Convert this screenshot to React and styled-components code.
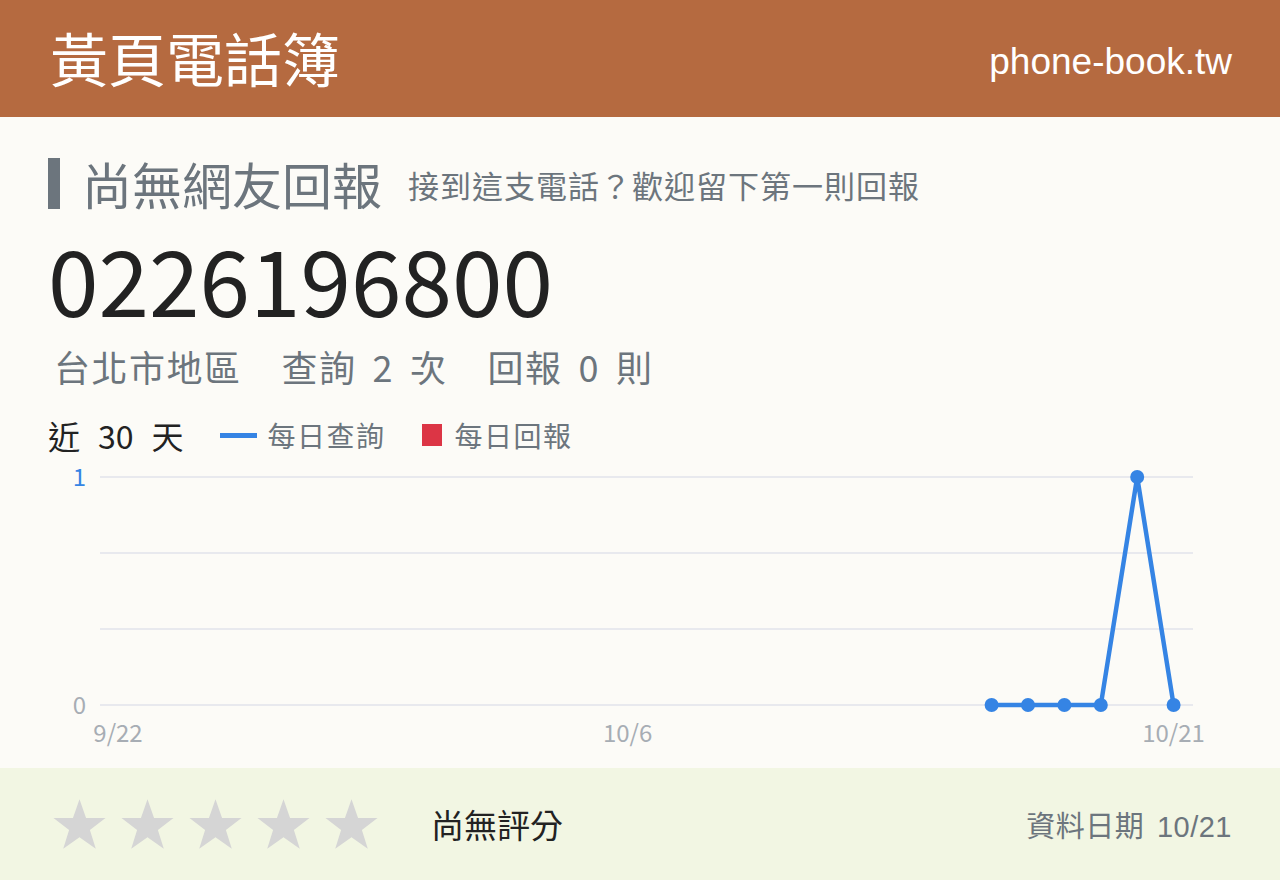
import React from 'react';
import styled, { createGlobalStyle } from 'styled-components';

const GlobalStyle = createGlobalStyle`
  html, body {
    margin: 0;
    padding: 0;
    background: #fcfbf7;
  }
  body {
    font-family: "Noto Sans CJK TC", "Noto Sans", sans-serif;
  }
`;

const Page = styled.div`
  width: 1280px;
  height: 880px;
  display: flex;
  flex-direction: column;
  background: #fcfbf7;
`;

const Header = styled.header`
  height: 117px;
  flex: none;
  display: flex;
  align-items: center;
  justify-content: space-between;
  padding: 0 48px 0 50px;
  background: #b56a40;
  color: #fff;
`;

const Brand = styled.div`
  font-size: 58px;
  line-height: 1;
  font-weight: 400;
  padding-bottom: 4px;
`;

const Domain = styled.div`
  font-family: "Liberation Sans", Arial, sans-serif;
  font-size: 37px;
  line-height: 1;
  padding-top: 6px;
`;

const Main = styled.main`
  flex: 1;
  display: flex;
  flex-direction: column;
  padding: 33px 48px 0;
`;

const TitleRow = styled.div`
  display: flex;
  align-items: center;
  height: 66px;
`;

const TitleBar = styled.span`
  width: 12px;
  height: 51px;
  background: #6c757d;
  margin-right: 22px;
`;

const Title = styled.h1`
  margin: 0;
  font-size: 50px;
  font-weight: 400;
  line-height: 1;
  color: #6c757d;
`;

const Subtitle = styled.span`
  margin-left: 26px;
  font-size: 31px;
  line-height: 1;
  letter-spacing: 1px;
  color: #6c757d;
  padding-top: 3px;
`;

const Phone = styled.div`
  font-size: 91px;
  line-height: 100px;
  height: 112px;
  color: #222;
  margin-top: 11px;
`;

const Stats = styled.div`
  display: flex;
  gap: 40px;
  margin-top: 5px;
  font-size: 36px;
  line-height: 44px;
  letter-spacing: 1.5px;
  color: #6c757d;
  padding-left: 6px;
`;

const Stat = styled.span`
  display: flex;
  white-space: pre;
`;

const Num = styled.span`
  margin: 0 ${(p) => p.space || '16px'};
`;

const ChartHead = styled.div`
  display: flex;
  align-items: center;
  margin-top: 27px;
  height: 40px;
`;

const Range = styled.span`
  display: flex;
  font-size: 32px;
  color: #222;
  margin-right: 36px;
`;

const Legend = styled.span`
  display: flex;
  align-items: center;
  font-size: 28px;
  color: #6c757d;
  letter-spacing: 1.5px;
  margin-right: 36px;
`;

const Swatch = styled.span`
  width: ${(p) => (p.line ? '37px' : '20px')};
  height: ${(p) => (p.line ? '5px' : '22px')};
  background: ${(p) => p.color};
  margin-right: ${(p) => (p.line ? '11px' : '13px')};
`;

const ChartSvg = styled.svg`
  display: block;
  width: 1184px;
  height: 290px;
  margin-top: 8px;
  font-family: "Noto Sans CJK JP", "Noto Sans", sans-serif;
`;

const Footer = styled.footer`
  height: 112px;
  flex: none;
  display: flex;
  align-items: center;
  padding: 0 48px 0 52px;
  background: #f2f6e3;
`;

const Stars = styled.div`
  display: flex;
  gap: 13px;
`;

const Rating = styled.span`
  margin-left: 52px;
  font-size: 33px;
  color: #222;
`;

const DataDate = styled.span`
  margin-left: auto;
  font-size: 29px;
  letter-spacing: 0.5px;
  color: #6c757d;
  font-family: "Liberation Sans", "Noto Sans CJK TC", sans-serif;
  word-spacing: 4px;
`;

const Star = () => (
  <svg width="55" height="52" viewBox="0 0 24 23">
    <path
      d="M12 0.5l2.9 8.3 8.6 0.1-6.9 5.2 2.6 8.4-7.2-5.1-7.2 5.1 2.6-8.4-6.9-5.2 8.6-0.1z"
      fill="#d5d5d5"
    />
  </svg>
);

const queries = Array.from({ length: 30 }, (_, i) => (i < 24 ? null : i === 28 ? 1 : 0));

const Chart = () => {
  const x0 = 70;
  const step = 36.4;
  const yTop = 14;
  const yBottom = 242;
  const pts = queries
    .map((v, i) => (v === null ? null : [x0 + i * step, yBottom - v * (yBottom - yTop)]))
    .filter(Boolean);
  const grid = [14, 90, 166, 242];
  return (
    <ChartSvg viewBox="0 0 1184 290">
      {grid.map((y) => (
        <line key={y} x1="52" x2="1145" y1={y} y2={y} stroke="#e8e9ee" strokeWidth="2" />
      ))}
      <text x="38" y="23" fill="#3584e4" fontSize="24" textAnchor="end">1</text>
      <text x="38" y="251" fill="#a7adb4" fontSize="24" textAnchor="end">0</text>
      <text x={x0} y="279" fill="#a7adb4" fontSize="24" textAnchor="middle">9/22</text>
      <text x={x0 + 14 * step} y="279" fill="#a7adb4" fontSize="24" textAnchor="middle">10/6</text>
      <text x={x0 + 29 * step} y="279" fill="#a7adb4" fontSize="24" textAnchor="middle">10/21</text>
      <polyline
        points={pts.map((p) => p.join(',')).join(' ')}
        fill="none"
        stroke="#3584e4"
        strokeWidth="4.5"
        strokeLinejoin="round"
      />
      {pts.map(([x, y]) => (
        <circle key={x} cx={x} cy={y} r="7" fill="#3584e4" />
      ))}
    </ChartSvg>
  );
};

export default function App() {
  return (
    <Page>
      <GlobalStyle />
      <Header>
        <Brand>黃頁電話簿</Brand>
        <Domain>phone-book.tw</Domain>
      </Header>
      <Main>
        <TitleRow>
          <TitleBar />
          <Title>尚無網友回報</Title>
          <Subtitle>接到這支電話？歡迎留下第一則回報</Subtitle>
        </TitleRow>
        <Phone>0226196800</Phone>
        <Stats>
          <Stat>台北市地區</Stat>
          <Stat>
            查詢<Num>2</Num>次
          </Stat>
          <Stat>
            回報<Num>0</Num>則
          </Stat>
        </Stats>
        <ChartHead>
          <Range>
            近<Num space="18px">30</Num>天
          </Range>
          <Legend>
            <Swatch line color="#3584e4" />
            每日查詢
          </Legend>
          <Legend>
            <Swatch color="#dc3545" />
            每日回報
          </Legend>
        </ChartHead>
        <Chart />
      </Main>
      <Footer>
        <Stars>
          {[0, 1, 2, 3, 4].map((i) => (
            <Star key={i} />
          ))}
        </Stars>
        <Rating>尚無評分</Rating>
        <DataDate>資料日期 10/21</DataDate>
      </Footer>
    </Page>
  );
}
